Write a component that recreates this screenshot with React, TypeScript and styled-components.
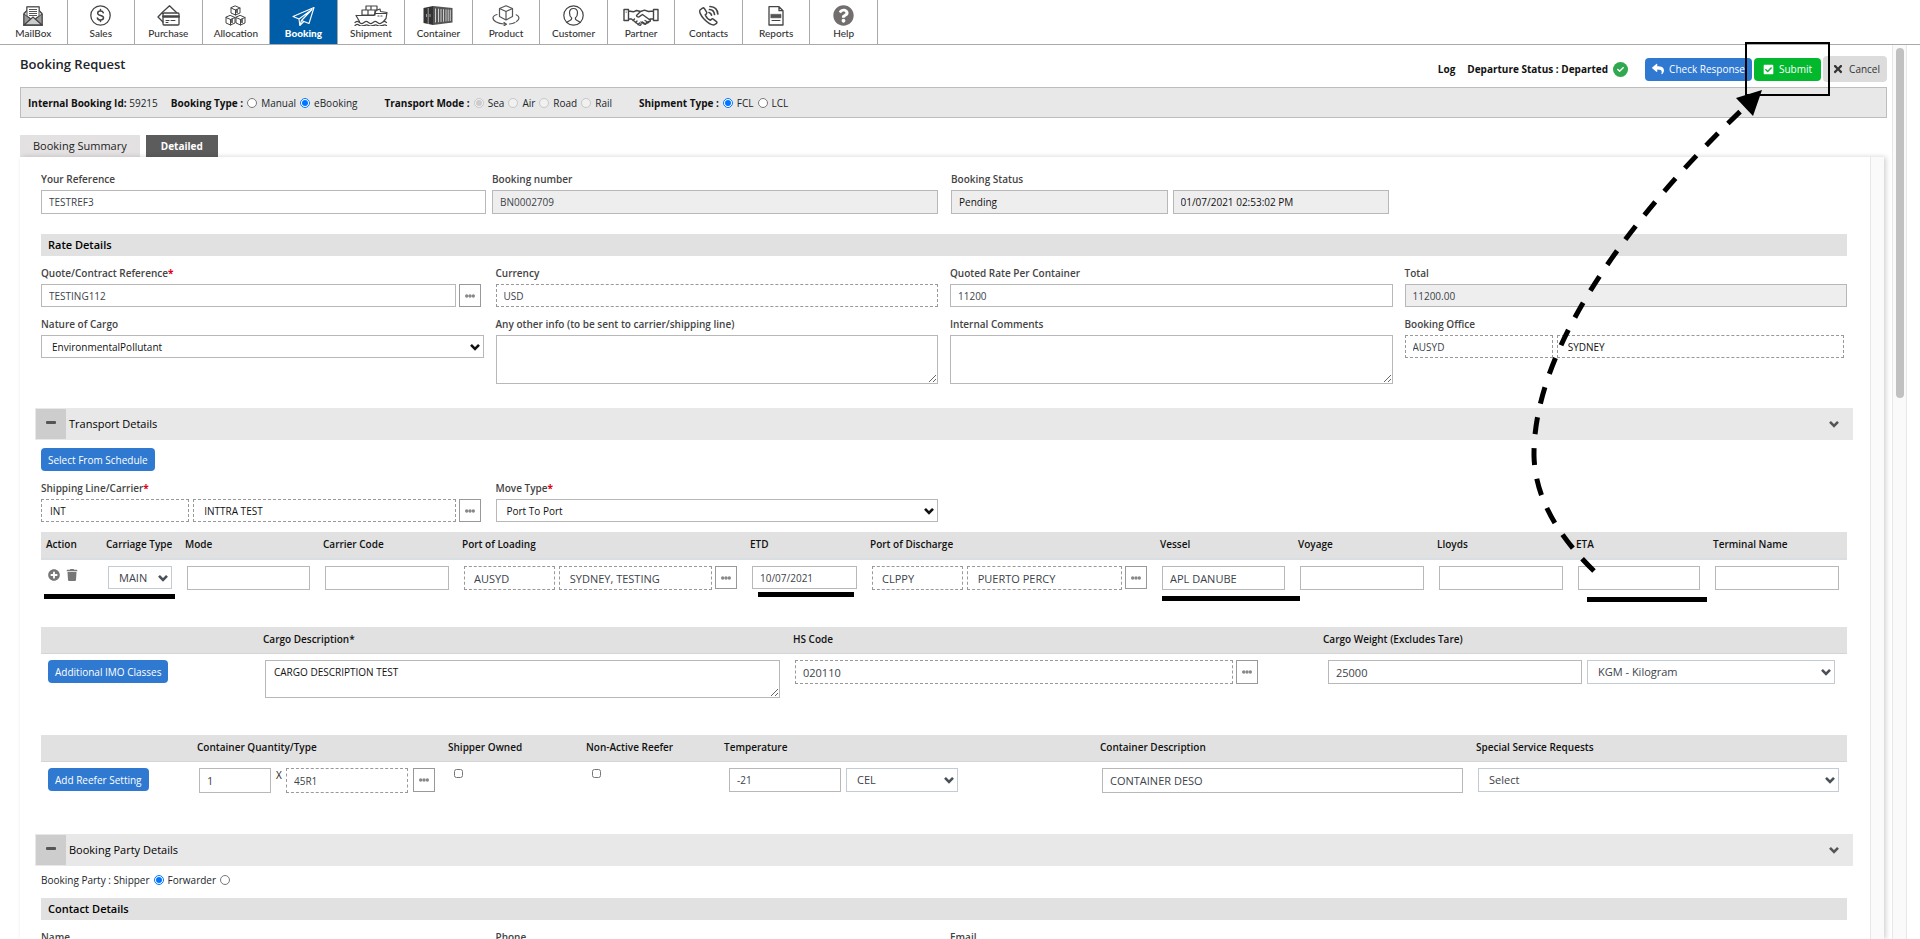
import React from "react";
import styled, { createGlobalStyle, css } from "styled-components";
import {
  FaCheck,
  FaCheckSquare,
  FaPlusCircle,
  FaQuestionCircle,
  FaReply,
  FaTimes,
  FaTrash,
} from "react-icons/fa";

const GlobalStyle = createGlobalStyle`
  *, *::before, *::after { box-sizing: border-box; }
  body {
    margin: 0;
    overflow: hidden;
    background: #fff;
    color: #212529;
    font-family: "Open Sans", "Liberation Sans", sans-serif;
    font-size: 10px;
    line-height: 14px;
  }
  input, select, textarea, button { font-family: inherit; margin: 0; }
`;

const Shell = styled.div`
  position: relative;
  display: flex;
  flex-direction: column;
  height: 100vh;
  overflow: hidden;
`;

/* ---------- top navigation ---------- */

const TopNav = styled.nav`
  flex: none;
  border-bottom: 1px solid #a9a9a9;
`;

const NavList = styled.ul`
  display: grid;
  grid-template-columns: repeat(13, 1fr);
  width: 878px;
  height: 44px;
  margin: 0;
  padding: 0;
  list-style: none;
`;

const NavLink = styled.a<{ $active?: boolean }>`
  display: flex;
  flex-direction: column;
  align-items: center;
  gap: 1px;
  height: 44px;
  padding-top: 5px;
  border-right: 1px solid #a9a9a9;
  background: ${(p) => (p.$active ? "#005da8" : "#fff")};
  color: ${(p) => (p.$active ? "#fff" : "#333")};
  font-family: Lato, "Liberation Sans", sans-serif;
  font-size: 10px;
  line-height: 12px;
  font-weight: ${(p) => (p.$active ? 900 : 500)};
  text-decoration: none;

  svg {
    display: block;
    height: 21px;
    width: auto;
  }
`;

/* ---------- page frame ---------- */

const Body = styled.div`
  display: flex;
  flex: 1;
  min-height: 0;
`;

const Main = styled.main`
  display: flex;
  flex-direction: column;
  flex: 1;
  min-width: 0;
  overflow: hidden;
  padding: 0 5px 0 20px;
`;

const ScrollTrack = styled.div`
  flex: none;
  width: 15px;
  margin-right: 13px;
  padding: 3px;
  border: solid #e8e8e8;
  border-width: 0 1px;
  background: #fafafa;
`;

const ScrollThumb = styled.div`
  width: 8px;
  height: 350px;
  border-radius: 4px;
  background: #c1c1c1;
`;

const TitleRow = styled.header`
  display: flex;
  justify-content: space-between;
  align-items: flex-start;
  padding: 11px 0 5px;
`;

const Title = styled.h1`
  margin: 0;
  font-size: 13px;
  line-height: 16px;
  font-weight: 600;
`;

const Actions = styled.div`
  display: flex;
  align-items: center;
  gap: 2px;
  height: 26px;
  color: #111;
  font-weight: 700;
`;

const LogLink = styled.a`
  margin-right: 10px;
  color: #111;
  text-decoration: none;
`;

const StatusDot = styled.span`
  display: grid;
  place-items: center;
  width: 15px;
  height: 15px;
  margin: 0 15px 0 3px;
  border-radius: 50%;
  background: #2fa84f;
  color: #fff;
  font-size: 7px;
`;

const toneFill = { blue: "#3079d1", green: "#02b92e", grey: "#dcdcdc" };
const tonePadding = { blue: "0 7px", green: "0 9px", grey: "0 7px 0 9px" };

const Button = styled.button<{ $tone?: "blue" | "green" | "grey" }>`
  display: inline-flex;
  align-items: center;
  gap: 5px;
  height: ${(p) => (p.$tone === "grey" ? 26 : 23)}px;
  padding: ${(p) => tonePadding[p.$tone ?? "blue"]};
  border: 0;
  border-radius: 4px;
  background: ${(p) => toneFill[p.$tone ?? "blue"]};
  color: ${(p) => (p.$tone === "grey" ? "#333" : "#fff")};
  font-size: 10px;
  line-height: 14px;
  font-weight: 500;
  white-space: nowrap;
`;

const InfoBar = styled.div`
  display: flex;
  align-items: center;
  height: 31px;
  padding: 0 7px;
  border: 1px solid #bdbdbd;
  background: #e8e8e8;
`;

const InfoGroup = styled.fieldset<{ $space: number }>`
  display: flex;
  align-items: center;
  margin: 0 ${(p) => p.$space}px 0 0;
  padding: 0;
  border: 0;
  gap: 4px;

  strong {
    color: #111;
    font-weight: 700;
  }
`;

const Option = styled.label`
  display: flex;
  align-items: center;
  gap: 4px;
`;

const Radio = styled.input.attrs({ type: "radio" })`
  width: 10px;
  height: 10px;
`;

const Tick = styled.input.attrs({ type: "checkbox" })`
  display: block;
  width: 9px;
  height: 9px;
`;

const TickCell = styled.div`
  padding: 1px 0 0 4px;
`;

const Tabs = styled.div`
  display: flex;
  gap: 6px;
  margin-top: 17px;
`;

const Tab = styled.button<{ $active?: boolean }>`
  height: 22px;
  padding: 0 ${(p) => (p.$active ? 15 : 13)}px;
  border: 0;
  background: ${(p) => (p.$active ? "#5c5c5c" : "#e3e1e1")};
  color: ${(p) => (p.$active ? "#fff" : "#222")};
  font-size: ${(p) => (p.$active ? 10 : 11)}px;
  line-height: 14px;
  font-weight: ${(p) => (p.$active ? 700 : 400)};
`;

const Panel = styled.div`
  display: flex;
  flex: 1;
  min-height: 0;
  margin-right: 3px;
  background: #fff;
  box-shadow: 2px 0 5px rgba(0, 0, 0, 0.18);
`;

const Gutter = styled.div`
  flex: none;
  width: 14px;
  border-left: 1px solid #e8e8e8;
  background: #fafafa;
`;

const Form = styled.form`
  flex: 1;
  min-width: 0;
  overflow: hidden;
  padding: 15px 23px 0 21px;
`;

/* ---------- form parts ---------- */

const FieldGrid = styled.div<{ $cols?: string; $top?: number }>`
  display: grid;
  grid-template-columns: ${(p) => p.$cols ?? "repeat(4, minmax(0, 1fr))"};
  gap: 10px ${(p) => (p.$cols ? 6 : 12)}px;
  margin-top: ${(p) => p.$top ?? 10}px;
`;

const FieldBox = styled.div<{ $end?: number }>`
  min-width: 0;
  padding-right: ${(p) => p.$end ?? 0}px;
`;

const Label = styled.label`
  display: block;
  margin-bottom: 4px;
  color: #444;
  font-weight: 600;

  em {
    color: #e2001a;
    font-style: normal;
    font-weight: 700;
  }
`;

const Line = styled.div<{ $gap?: number; $start?: number; $end?: number }>`
  display: flex;
  flex: 1;
  gap: ${(p) => p.$gap ?? 3}px;
  min-width: 0;
  padding: 0 ${(p) => p.$end ?? 0}px 0 ${(p) => p.$start ?? 0}px;
`;

type ControlProps = {
  $grow?: number;
  $h?: number;
  $look?: "plain" | "dashed" | "grey";
  $ink?: string;
  $big?: boolean;
  $pad?: number;
};

/* $grow is the control's share of its line. */
const share = css<{ $grow?: number }>`
  flex: ${(p) => p.$grow ?? 100} 1 ${(p) => p.$grow ?? 100}px;
  min-width: 0;
`;

const control = css<ControlProps>`
  ${share}
  display: block;
  width: 100%;
  height: ${(p) => p.$h ?? 23}px;
  padding: 0 ${(p) => p.$pad ?? 7}px;
  border: 1px ${(p) => (p.$look === "dashed" ? "dashed #999" : "solid #b8b8b8")};
  border-radius: 0;
  background: ${(p) => (p.$look === "grey" ? "#eee" : "#fff")};
  color: ${(p) => p.$ink ?? "#3c434a"};
  font-size: ${(p) => (p.$big ? 11 : 10)}px;
  line-height: 14px;
`;

const Input = styled.input<ControlProps>`
  ${control}
`;

const TextArea = styled.textarea<ControlProps>`
  ${control}
  padding-top: 4px;
`;

const SelectBox = styled.div<{ $grow?: number }>`
  ${share}
  position: relative;

  svg {
    position: absolute;
    top: 50%;
    right: 4px;
    margin-top: -4px;
    pointer-events: none;
  }
`;

const SelectControl = styled.select<ControlProps>`
  ${control}
  appearance: none;
  border-color: ${(p) => (p.$big ? "#c3cbd3" : "#b8b8b8")};
`;

const DotsButton = styled.button<{ $h?: number }>`
  display: grid;
  flex: none;
  place-items: center;
  width: 22px;
  height: ${(p) => p.$h ?? 23}px;
  padding: 0;
  border: 1px solid #999;
  background: #fff;
`;

const SubHeading = styled.h3<{ $top: number }>`
  height: 22px;
  margin: ${(p) => p.$top}px 0 0;
  padding: 0 7px;
  background: #e1e1e1;
  color: #000;
  font-size: 11px;
  line-height: 22px;
  font-weight: 600;
`;

const SectionBar = styled.h2<{ $top: number }>`
  display: flex;
  align-items: center;
  height: 32px;
  margin: ${(p) => p.$top}px -6px 0 -6px;
  padding: 1px 14px 1px 0;
  border-left: 1px solid #e8e8e8;
  background: #e8e8e8;
  color: #000;
  font-size: 11px;
  line-height: 16px;
  font-weight: 400;

  span {
    flex: 1;
    padding-left: 3px;
  }
`;

const Collapse = styled.button`
  display: grid;
  place-items: center;
  width: 30px;
  height: 30px;
  padding: 0 0 2px;
  border: 0;
  background: #cdcdcd;
`;

const ButtonRow = styled.div`
  display: flex;
  margin-top: 8px;
`;

const Grid = styled.table<{ $head: number; $row: number; $top?: number }>`
  width: 100%;
  margin-top: ${(p) => p.$top ?? 0}px;
  table-layout: fixed;
  border-collapse: separate;
  border-spacing: 0;

  th {
    height: ${(p) => p.$head}px;
    padding: 0 0 2px 5px;
    border-bottom: ${(p) => (p.$head === 28 ? "2px solid #d9dee2" : "1px solid #d5d5d5")};
    background: #e1e1e1;
    color: #111;
    font-weight: 600;
    text-align: left;
    white-space: nowrap;
  }

  td {
    height: ${(p) => p.$row}px;
    padding: 6px 8px 0 7px;
    vertical-align: top;
  }
`;

const RowIcons = styled.div`
  display: flex;
  gap: 6px;
  padding-top: 3px;
  color: #777;
  font-size: 12px;

  button {
    display: block;
    height: 12px;
    padding: 0;
    border: 0;
    background: none;
    color: inherit;
    font-size: inherit;
    line-height: 12px;
  }
`;

const Times = styled.span`
  flex: none;
  width: 5px;
  line-height: 14px;
  color: #222;
`;

const PartyRow = styled.fieldset`
  display: flex;
  align-items: center;
  gap: 4px;
  height: 28px;
  margin: 0 0 4px;
  padding: 0;
  border: 0;
`;

/* The instruction marks lie on top of the whole page. */
const Annotations = styled.svg`
  position: absolute;
  top: 0;
  left: 0;
  pointer-events: none;
`;

/* ---------- icons ---------- */

const stroke = { fill: "none", stroke: "#444", strokeWidth: 1.3, strokeLinejoin: "round" as const, strokeLinecap: "round" as const };

const icons: Record<string, React.ReactNode> = {
  MailBox: (
    <svg viewBox="0 0 20 21">
      <path d="M1 8.500 4 5.500V2h12v3.500l3 3V20H1Z" fill="#ddd" stroke="#444" strokeWidth="1.400" />
      <path d="M4 2h12v9l-6 4-6-4Z" fill="#fff" stroke="#555" />
      <path d="M6 4.500h8M6 6.500h8M6 8.500h8M6 10.500h8" stroke="#555" />
      <path d="M1 9l7 5.500L1 20ZM19 9l-7 5.500 7 5.500Z" fill="#999" stroke="#444" />
      <path d="M1 20l9-8 9 8Z" fill="#ccc" stroke="#444" strokeWidth="1.300" />
    </svg>
  ),
  Sales: (
    <svg viewBox="0 0 21 21" {...stroke}>
      <circle cx="10.500" cy="10.500" r="9.700" />
      <path d="M13.300 7.800c-.4-1.200-1.500-1.700-2.800-1.700-1.600 0-2.800.8-2.800 2.100 0 3.200 5.800 1.500 5.800 4.600 0 1.300-1.200 2.200-3 2.200-1.600 0-2.800-.7-3.100-2M10.500 4.500v1.600M10.500 15v1.600" strokeWidth="1.500" />
    </svg>
  ),
  Purchase: (
    <svg viewBox="0 0 23 21" {...stroke}>
      <path d="M6 8.500 5 7.700 1 12l5 5M5 7.700 12.500.8l7 6.700" />
      <rect x="6" y="8" width="16" height="12" rx="1" />
      <path d="M6.500 11.500h15" strokeWidth="2.500" />
      <path d="M9 15.500h3M14 15.500h4M9 17.500h2" strokeWidth="1" />
    </svg>
  ),
  Allocation: (
    <svg viewBox="0 0 21 21" {...stroke} strokeWidth="1">
      <path d="M10.500 1 15 3v5l-4.500 2L6 8V3ZM6 3l4.500 2L15 3M10.500 5v5" />
      <path d="M5.500 10.500 10 12.500v5.500l-4.500 2L1 18v-5.500ZM1 12.500l4.500 2 4.500-2M5.500 14.500V20" />
      <path d="M15.500 10.500l4.500 2V18l-4.500 2-4.500-2v-5.500ZM11 12.500l4.500 2 4.500-2M15.500 14.500V20" />
      <path d="M12 4.500v3M7 14.500v3M17 14.500v3" strokeWidth="1.600" />
    </svg>
  ),
  Booking: (
    <svg viewBox="0 0 23 21" {...stroke} stroke="#fff" strokeWidth="1.100">
      <path d="M22 2.500 1 11.500l6 2.500 13-9.500L9.500 15.500 17 18.500Z M7 14l.8 6.500L9.500 15.500M7.800 20.500l4-4" />
    </svg>
  ),
  Shipment: (
    <svg viewBox="0 0 34 21" {...stroke} strokeWidth="1.200">
      <path d="M12 1h5v4h-5ZM17 1h6v4h-6ZM8 5h6v5H8ZM14 5h7v5h-7Z" />
      <path d="M2 10.500h18l2-5 4-1.500.5 2.500 6.500 1-1 6-2.500 3M2 10.500l3.500 6M21 8.500h11M24 11h1M27 11h1" />
      <path d="M1 17.500c2-1.500 2.500-1.500 4.500 0s2.500 1.500 4.500 0 2.500-1.500 4.500 0 2.500 1.500 4.500 0 2.500-1.500 4.500 0 2.500 1.500 4.500 0 2.500-1.500 4.500 0M1 20.500c2-1.500 2.500-1.500 4.500 0s2.500 0 4.500 0 2.500-1.500 4.500 0 2.500 0 4.500 0 2.500-1.500 4.500 0 2.500 0 4.500 0 2.500-1.500 4.500 0" />
    </svg>
  ),
  Container: (
    <svg viewBox="0 0 30 21">
      <path d="M.5 3 10 1v19L.5 18Z" fill="#333" />
      <path d="M10 1 29.500 3v14.500L10 20Z" fill="#555" />
      <path d="M12.500 3.500v14M15.500 3.700v13.500M18 4v13M20.500 4.200v12.500M23 4.400v12M25.200 4.500v11.700M27.300 4.700v11.300" stroke="#ddd" strokeWidth=".9" />
      <path d="M5.200 3v16M3.500 9v3M7 9v3" stroke="#bbb" strokeWidth=".8" />
    </svg>
  ),
  Product: (
    <svg viewBox="0 0 28 21" {...stroke} stroke="#555" strokeWidth="1.200">
      <path d="M14 .8 20.500 3.500v8L14 15l-6.500-3.500v-8ZM7.500 3.500 14 6.500l6.500-3M14 6.500V15" />
      <path d="M5 9.500c-2.500.8-4 2-4 3.500 0 3 5 5.500 11 6l2 .2M12 17.500l2.500 1.700L12 20.700M17.500 19c2-.2 4-.7 5.500-1.500M24.500 16.500c1.500-1 2.500-2 2.500-3.500 0-1.200-1-2.300-2.800-3.200" />
    </svg>
  ),
  Customer: (
    <svg viewBox="0 0 21 21" {...stroke} strokeWidth="1.200">
      <circle cx="10.500" cy="10.500" r="9.700" />
      <path d="M10.500 3.500c-2.500 0-4 1.700-4 4.200s1 4.500 2.200 5.300c.2 1.500-.5 2-1.700 2.500-1.500.6-2.500 1-3 2M10.500 3.500c2.500 0 4 1.700 4 4.200s-1 4.500-2.200 5.300c-.2 1.500.5 2 1.700 2.500 1.500.6 2.500 1 3 2" />
    </svg>
  ),
  Partner: (
    <svg viewBox="0 0 36 21" {...stroke} strokeWidth="1.400">
      <path d="M1 4.500h4.500v11H1ZM35 4.500h-4.500v11H35ZM5.500 6l5 .8 3-1.300 4 1 4-1.300 4 1.300 5-.5M17.500 6.500l-4 4c0 1.500 2 2 3.500.7l2.500-1.700 7.500 5.500c.8 1.200-.5 2.200-1.500 1.500M5.500 14h3l7.500 6c1 .6 2.300 0 2-1.200M25.500 16.500c.3 1.300-1.200 2-2.200 1.200M23.300 17.700c.3 1.300-1.200 2-2.300 1.300l-3-2M27 14h3.500M22 15.500l3.500 2M19.500 17l3 2M10 15.500l1.500-1.500M12.500 17.500l1.500-1.500M15 19.500l1.500-1.500" />
      <path d="M3.200 7v.1" strokeWidth="1.200" />
    </svg>
  ),
  Contacts: (
    <svg viewBox="0 0 21 21" {...stroke}>
      <path d="M4.500 3.200 2 5c-1 1 .2 5 4 9s8 6 10 6l2.500-1.700c.6-.5.500-1.200 0-1.700l-3.300-2.500c-.6-.4-1.200-.3-1.700.2l-1 1c-2-.8-4.500-3.500-5.300-5.500l1.200-1c.5-.5.5-1 .2-1.600L6.300 3.400c-.5-.6-1.200-.7-1.800-.2Z" strokeWidth="1.500" />
      <path d="M11 7.500c1.500.3 2.300 1.200 2.500 2.700M11.500 4.500c3 .2 4.700 2 5 5M12 1.500c5 .3 7.500 3 7.800 7.500" strokeWidth="1.700" />
    </svg>
  ),
  Reports: (
    <svg viewBox="0 0 16 21" {...stroke}>
      <path d="M1 1.700h10l4 4V20H1ZM11 1.700v4h4" />
      <path d="M3 9.300h10v3.500H3Z" fill="#555" strokeWidth=".5" />
      <path d="M4 15.500h8" strokeWidth="1" />
    </svg>
  ),
  Help: <FaQuestionCircle color="#736e6e" />,
};

const Chevron = ({ color = "#111" }: { color?: string }) => (
  <svg width="10" height="8" viewBox="0 0 10 8" aria-hidden="true">
    <path d="M1 1.800 5 5.800 9 1.800" fill="none" stroke={color} strokeWidth="2.600" />
  </svg>
);

/* ---------- small composites ---------- */

const Dots = ({ h, label }: { h?: number; label: string }) => (
  <DotsButton type="button" $h={h} aria-label={label}>
    <svg width="10" height="4" viewBox="0 0 10 4" fill="#888">
      <circle cx="1.700" cy="2" r="1.700" />
      <circle cx="5" cy="2" r="1.700" />
      <circle cx="8.300" cy="2" r="1.700" />
    </svg>
  </DotsButton>
);

type FieldProps = { id: string; label: string; required?: boolean; end?: number; children: React.ReactNode };

const Field = ({ id, label, required, end, children }: FieldProps) => (
  <FieldBox $end={end}>
    <Label htmlFor={id}>
      {label}
      {required && <em>*</em>}
    </Label>
    {children}
  </FieldBox>
);

type SelectProps = ControlProps & { id?: string; value: string; label?: string };

const Select = ({ id, value, label, $grow, ...rest }: SelectProps) => (
  <SelectBox $grow={$grow}>
    <SelectControl id={id} aria-label={label} $pad={10} {...rest}>
      <option>{value}</option>
    </SelectControl>
    <Chevron color={rest.$big ? "#495057" : "#111"} />
  </SelectBox>
);

type ChoiceProps = { name: string; options: string[]; chosen: string; disabled?: boolean };

const Choices = ({ name, options, chosen, disabled }: ChoiceProps) => (
  <>
    {options.map((text) => (
      <Option key={text}>
        <Radio name={name} defaultChecked={text === chosen} disabled={disabled} />
        {text}
      </Option>
    ))}
  </>
);

const Columns = ({ widths }: { widths: number[] }) => (
  <colgroup>
    {widths.map((w, i) => (
      <col key={i} width={w} />
    ))}
  </colgroup>
);

const Head = ({ titles }: { titles: string[] }) => (
  <thead>
    <tr>
      {titles.map((t, i) => (
        <th key={i} scope="col">
          {t}
        </th>
      ))}
    </tr>
  </thead>
);

const Section = ({ title, top }: { title: string; top: number }) => (
  <SectionBar $top={top}>
    <Collapse type="button" aria-label={`Collapse ${title}`}>
      <svg width="10" height="4" viewBox="0 0 10 4" aria-hidden="true">
        <rect width="10" height="3" rx="1" fill="#555" />
      </svg>
    </Collapse>
    <span>{title}</span>
    <Chevron color="#555" />
  </SectionBar>
);

/* ---------- page ---------- */

export default function App() {
  return (
    <Shell>
      <GlobalStyle />
      <TopNav>
        <NavList>
          {Object.entries(icons).map(([name, icon]) => (
            <li key={name}>
              <NavLink href="#" $active={name === "Booking"}>
                {icon}
                {name}
              </NavLink>
            </li>
          ))}
        </NavList>
      </TopNav>

      <Body>
        <Main>
          <TitleRow>
            <Title>Booking Request</Title>
            <Actions>
              <LogLink href="#">Log</LogLink>
              <span>Departure Status : Departed</span>
              <StatusDot>
                <FaCheck />
              </StatusDot>
              <Button type="button">
                <FaReply size={12} />
                Check Response
              </Button>
              <Button type="button" $tone="green">
                <FaCheckSquare size={11} />
                Submit
              </Button>
              <Button type="button" $tone="grey">
                <FaTimes size={12} />
                Cancel
              </Button>
            </Actions>
          </TitleRow>

          <InfoBar>
            <InfoGroup as="div" $space={13}>
              <span>
                <strong>Internal Booking Id:</strong> 59215
              </span>
            </InfoGroup>
            <InfoGroup $space={27}>
              <strong>Booking Type :</strong>
              <Choices name="bookingType" options={["Manual", "eBooking"]} chosen="eBooking" />
            </InfoGroup>
            <InfoGroup $space={27}>
              <strong>Transport Mode :</strong>
              <Choices name="mode" options={["Sea", "Air", "Road", "Rail"]} chosen="Sea" disabled />
            </InfoGroup>
            <InfoGroup $space={0}>
              <strong>Shipment Type :</strong>
              <Choices name="shipmentType" options={["FCL", "LCL"]} chosen="FCL" />
            </InfoGroup>
          </InfoBar>

          <Tabs>
            <Tab type="button">Booking Summary</Tab>
            <Tab type="button" $active>
              Detailed
            </Tab>
          </Tabs>

          <Panel>
            <Form>
              <FieldGrid $top={0} $cols="445fr 453fr 438fr 452fr">
                <Field id="reference" label="Your Reference">
                  <Input id="reference" defaultValue="TESTREF3" $h={24} />
                </Field>
                <Field id="number" label="Booking number" end={7}>
                  <Input id="number" defaultValue="BN0002709" $h={24} $look="grey" readOnly />
                </Field>
                <Field id="status" label="Booking Status">
                  <Line $gap={5}>
                    <Input id="status" defaultValue="Pending" $h={24} $look="grey" $ink="#111" readOnly />
                    <Input aria-label="Status time" defaultValue="01/07/2021 02:53:02 PM" $h={24} $look="grey" $ink="#111" readOnly />
                  </Line>
                </Field>
              </FieldGrid>

              <SubHeading $top={20}>Rate Details</SubHeading>
              <FieldGrid>
                <Field id="quote" label="Quote/Contract Reference" required end={3}>
                  <Line>
                    <Input id="quote" defaultValue="TESTING112" />
                    <Dots label="Find quote" />
                  </Line>
                </Field>
                <Field id="currency" label="Currency">
                  <Input id="currency" defaultValue="USD" $look="dashed" />
                </Field>
                <Field id="rate" label="Quoted Rate Per Container">
                  <Input id="rate" defaultValue="11200" />
                </Field>
                <Field id="total" label="Total">
                  <Input id="total" defaultValue="11200.00" $look="grey" readOnly />
                </Field>
                <Field id="nature" label="Nature of Cargo">
                  <Select id="nature" value="EnvironmentalPollutant" $ink="#111" />
                </Field>
                <Field id="info" label="Any other info (to be sent to carrier/shipping line)">
                  <TextArea id="info" $h={49} />
                </Field>
                <Field id="comments" label="Internal Comments">
                  <TextArea id="comments" $h={49} />
                </Field>
                <Field id="office" label="Booking Office" end={3}>
                  <Line $gap={4}>
                    <Input id="office" defaultValue="AUSYD" $look="dashed" $grow={148} />
                    <Input aria-label="Booking office name" defaultValue="SYDNEY" $look="dashed" $grow={287} $pad={10} $ink="#111" />
                  </Line>
                </Field>
              </FieldGrid>

              <Section title="Transport Details" top={24} />
              <ButtonRow>
                <Button type="button">Select From Schedule</Button>
              </ButtonRow>
              <FieldGrid>
                <Field id="carrier" label="Shipping Line/Carrier" required end={3}>
                  <Line>
                    <Line $gap={4}>
                      <Input id="carrier" defaultValue="INT" $look="dashed" $grow={148} $pad={8} $ink="#111" />
                      <Input aria-label="Carrier name" defaultValue="INTTRA TEST" $look="dashed" $grow={262} $pad={10} $ink="#111" />
                    </Line>
                    <Dots label="Find carrier" />
                  </Line>
                </Field>
                <Field id="move" label="Move Type" required>
                  <Select id="move" value="Port To Port" $ink="#111" />
                </Field>
              </FieldGrid>

              <Grid $head={28} $row={67} $top={10}>
                <Columns widths={[60, 79, 138, 139, 288, 120, 290, 138, 139, 139, 137, 139]} />
                <Head
                  titles={["Action", "Carriage Type", "Mode", "Carrier Code", "Port of Loading", "ETD", "Port of Discharge", "Vessel", "Voyage", "Lloyds", "ETA", "Terminal Name"]}
                />
                <tbody>
                  <tr>
                    <td>
                      <RowIcons>
                        <button type="button" aria-label="Add leg">
                          <FaPlusCircle />
                        </button>
                        <button type="button" aria-label="Delete leg">
                          <FaTrash />
                        </button>
                      </RowIcons>
                    </td>
                    <td>
                      <Select value="MAIN" label="Carriage type" $big />
                    </td>
                    <td>
                      <Input aria-label="Mode" $h={24} />
                    </td>
                    <td>
                      <Input aria-label="Carrier code" $h={24} />
                    </td>
                    <td>
                      <Line>
                        <Line $gap={4}>
                          <Input aria-label="Loading port code" defaultValue="AUSYD" $big $h={24} $look="dashed" $grow={90} $pad={9} />
                          <Input aria-label="Loading port name" defaultValue="SYDNEY, TESTING" $big $h={24} $look="dashed" $grow={152} $pad={10} />
                        </Line>
                        <Dots label="Find loading port" />
                      </Line>
                    </td>
                    <td>
                      <Input aria-label="ETD" defaultValue="10/07/2021" />
                    </td>
                    <td>
                      <Line>
                        <Line $gap={4}>
                          <Input aria-label="Discharge port code" defaultValue="CLPPY" $big $h={24} $look="dashed" $grow={90} $pad={9} />
                          <Input aria-label="Discharge port name" defaultValue="PUERTO PERCY" $big $h={24} $look="dashed" $grow={154} $pad={10} />
                        </Line>
                        <Dots label="Find discharge port" />
                      </Line>
                    </td>
                    <td>
                      <Input aria-label="Vessel" defaultValue="APL DANUBE" $big $h={24} />
                    </td>
                    <td>
                      <Input aria-label="Voyage" $h={24} />
                    </td>
                    <td>
                      <Input aria-label="Lloyds" $h={24} />
                    </td>
                    <td>
                      <Input aria-label="ETA" $h={24} />
                    </td>
                    <td>
                      <Input aria-label="Terminal name" $h={24} />
                    </td>
                  </tr>
                </tbody>
              </Grid>

              <Grid $head={27} $row={81}>
                <Columns widths={[217, 530, 530, 529]} />
                <Head titles={["", "Cargo Description*", "HS Code", "Cargo Weight (Excludes Tare)"]} />
                <tbody>
                  <tr>
                    <td>
                      <Button type="button">Additional IMO Classes</Button>
                    </td>
                    <td>
                      <TextArea aria-label="Cargo description" defaultValue="CARGO DESCRIPTION TEST" $h={38} $pad={8} $ink="#111" />
                    </td>
                    <td>
                      <Line $end={52}>
                        <Input aria-label="HS code" defaultValue="020110" $big $h={24} $look="dashed" />
                        <Dots h={24} label="Find HS code" />
                      </Line>
                    </td>
                    <td>
                      <Line $gap={5} $start={3} $end={4}>
                        <Input aria-label="Cargo weight" defaultValue="25000" $big $h={24} $grow={254} />
                        <Select value="KGM - Kilogram" label="Weight unit" $big $h={24} $grow={248} />
                      </Line>
                    </td>
                  </tr>
                </tbody>
              </Grid>

              <Grid $head={27} $row={72}>
                <Columns widths={[151, 251, 138, 138, 376, 376, 376]} />
                <Head
                  titles={["", "Container Quantity/Type", "Shipper Owned", "Non-Active Reefer", "Temperature", "Container Description", "Special Service Requests"]}
                />
                <tbody>
                  <tr>
                    <td>
                      <Button type="button">Add Reefer Setting</Button>
                    </td>
                    <td>
                      <Line $gap={5}>
                        <Input aria-label="Container quantity" defaultValue="1" $big $h={25} $grow={72} />
                        <Times>X</Times>
                        <Input aria-label="Container type" defaultValue="45R1" $h={25} $look="dashed" $grow={122} />
                        <Dots h={24} label="Find container type" />
                      </Line>
                    </td>
                    <td>
                      <TickCell>
                        <Tick aria-label="Shipper owned" />
                      </TickCell>
                    </td>
                    <td>
                      <TickCell>
                        <Tick aria-label="Non-active reefer" />
                      </TickCell>
                    </td>
                    <td>
                      <Line $gap={5} $start={3} $end={129}>
                        <Input aria-label="Temperature" defaultValue="-21" $h={24} $grow={112} />
                        <Select value="CEL" label="Temperature unit" $big $h={24} $grow={112} />
                      </Line>
                    </td>
                    <td>
                      <Input aria-label="Container description" defaultValue="CONTAINER DESO" $big $h={25} />
                    </td>
                    <td>
                      <Select value="Select" label="Special service requests" $big $h={24} />
                    </td>
                  </tr>
                </tbody>
              </Grid>

              <Section title="Booking Party Details" top={0} />
              <PartyRow>
                <label htmlFor="shipper">Booking Party : Shipper</label>
                <Radio id="shipper" name="party" defaultChecked />
                <label htmlFor="forwarder">Forwarder</label>
                <Radio id="forwarder" name="party" />
              </PartyRow>

              <SubHeading $top={0}>Contact Details</SubHeading>
              <FieldGrid>
                <Field id="name" label="Name">
                  <Input id="name" />
                </Field>
                <Field id="phone" label="Phone">
                  <Input id="phone" />
                </Field>
                <Field id="email" label="Email">
                  <Input id="email" />
                </Field>
              </FieldGrid>
            </Form>
            <Gutter />
          </Panel>
        </Main>
        <ScrollTrack>
          <ScrollThumb />
        </ScrollTrack>
      </Body>

      <Annotations width="1920" height="939" viewBox="0 0 1920 939" aria-hidden="true">
        <rect x="1746" y="43" width="83" height="52" fill="none" stroke="#000" strokeWidth="2" />
        <path
          d="M1594 571C1555 533 1535 495 1534 456C1533 360 1610 235 1748 104"
          fill="none"
          stroke="#000"
          strokeWidth="5"
          strokeDasharray="17 14"
        />
        <path d="M1762 90 1736 98 1753 116Z" />
        <path d="M44 596.500H175M758 594.500H854M1162 598.500H1300M1587 599.500H1707" stroke="#000" strokeWidth="5" />
      </Annotations>
    </Shell>
  );
}
